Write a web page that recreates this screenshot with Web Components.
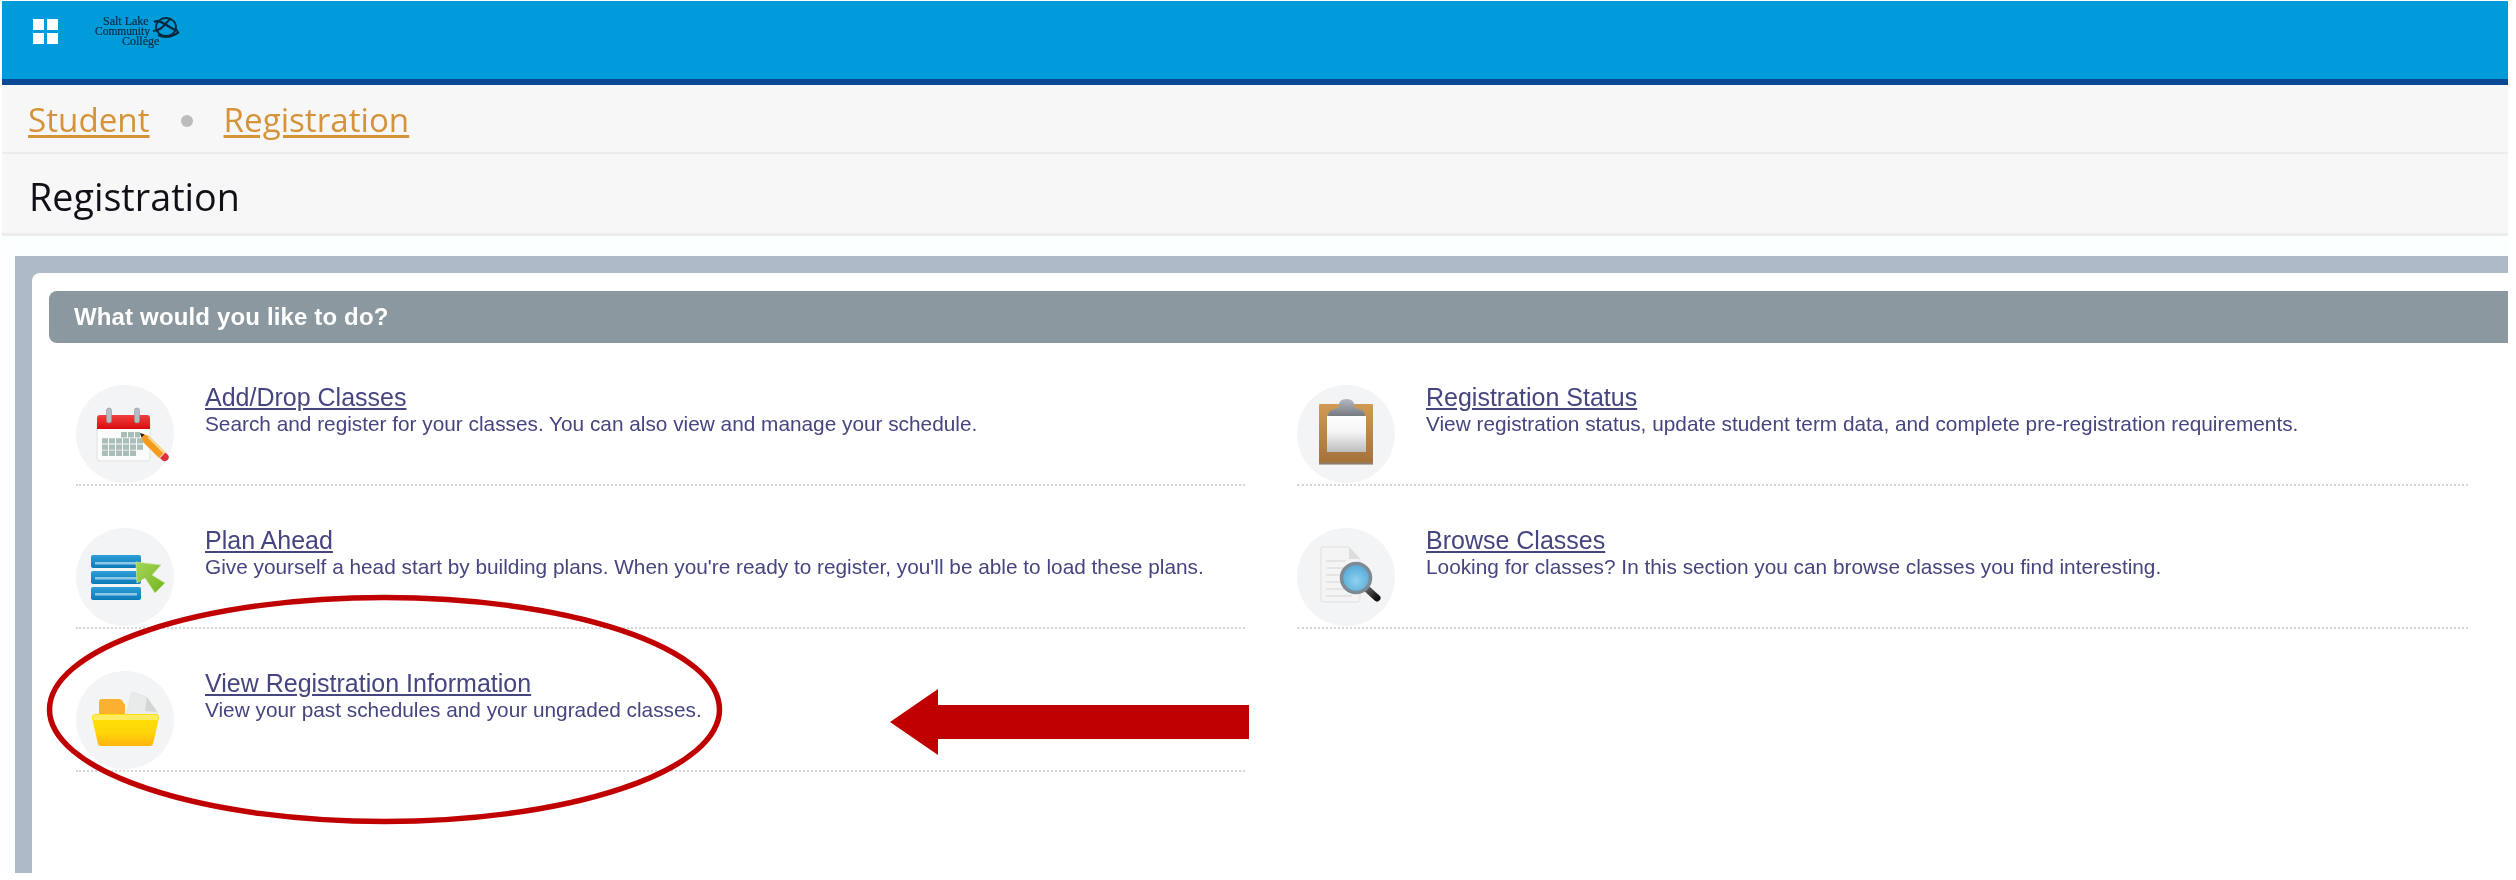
<!DOCTYPE html>
<html lang="en">
<head>
<meta charset="utf-8">
<title>Registration</title>
<style>
html,body{margin:0;padding:0;background:#fff}
body{position:relative;width:2516px;height:880px;overflow:hidden}
</style>
</head>
<body>
<reg-page>
  <reg-topbar slot="top"></reg-topbar>
  <reg-crumbs slot="top"></reg-crumbs>
  <reg-title slot="top">Registration</reg-title>
  <reg-panel heading="What would you like to do?">
    <reg-task icon="calendar" name="Add/Drop Classes">Search and register for your classes. You can also view and manage your schedule.</reg-task>
    <reg-task icon="clipboard" name="Registration Status">View registration status, update student term data, and complete pre-registration requirements.</reg-task>
    <reg-task icon="plan" name="Plan Ahead">Give yourself a head start by building plans. When you're ready to register, you'll be able to load these plans.</reg-task>
    <reg-task icon="browse" name="Browse Classes">Looking for classes? In this section you can browse classes you find interesting.</reg-task>
    <reg-task icon="folder" name="View Registration Information">View your past schedules and your ungraded classes.</reg-task>
  </reg-panel>
</reg-page>
<reg-callout></reg-callout>
<script>
const ICONS = {
calendar:`<defs><linearGradient id="r" x1="0" y1="0" x2="0" y2="1"><stop offset="0" stop-color="#f0403f"/><stop offset="1" stop-color="#d90c10"/></linearGradient></defs>
<rect x="21" y="36" width="53" height="40" rx="3" fill="#fbfbfb" stroke="#dfe2e3"/>
<path d="M21 44V33a3 3 0 0 1 3-3h47a3 3 0 0 1 3 3v11z" fill="url(#r)"/>
<rect x="30.500" y="23" width="5" height="15" rx="2.500" fill="#b5bcc4" stroke="#8b95a0" stroke-width=".6"/>
<rect x="58.500" y="23" width="5" height="15" rx="2.500" fill="#b5bcc4" stroke="#8b95a0" stroke-width=".6"/>
<g fill="#a9bdb9"><path d="M45 47h6v5.400h-6zM52 47h6v5.400h-6zM59 47h5v5.400h-5z"/>
<path d="M26 53.200h6v5.400h-6zM33 53.200h6v5.400h-6zM40 53.200h6v5.400h-6zM47 53.200h6v5.400h-6zM54 53.200h6v5.400h-6zM61 53.200h6v5.400h-6z"/>
<path d="M26 59.400h6v5.400h-6zM33 59.400h6v5.400h-6zM40 59.400h6v5.400h-6zM47 59.400h6v5.400h-6zM54 59.400h6v5.400h-6zM61 59.400h6v5.400h-6z"/>
<path d="M26 65.600h6v5.400h-6zM33 65.600h6v5.400h-6zM40 65.600h6v5.400h-6zM47 65.600h6v5.400h-6zM54 65.600h6v5.400h-6z"/></g>
<path d="M64 48l9 3 16 16-6 6-16-16z" fill="#f59a1f"/>
<path d="M73 51l16 16-1.500 1.500-16-16z" fill="#fcd98a"/>
<path d="M64 48l4.500 1.500-3 3z" fill="#222"/>
<path d="M84 73l5.500-5.500 2 2a3.800 3.800 0 0 1-5.500 5.500z" fill="#e2303a"/>`,
plan:`<defs><linearGradient id="b" x1="0" y1="0" x2="0" y2="1"><stop offset="0" stop-color="#2e9fd6"/><stop offset="1" stop-color="#0d7ab8"/></linearGradient><linearGradient id="g" x1="0" y1="0" x2="1" y2="1"><stop offset="0" stop-color="#a4d65a"/><stop offset="1" stop-color="#74b41f"/></linearGradient></defs>
<g fill="url(#b)"><rect x="15" y="27" width="50" height="13" rx="2"/><rect x="15" y="43" width="50" height="13" rx="2"/><rect x="15" y="59" width="50" height="13" rx="2"/></g>
<g fill="#8fc8e6"><rect x="19" y="34" width="42" height="2.500"/><rect x="19" y="49" width="42" height="2.500"/><rect x="19" y="65" width="42" height="2.500"/></g>
<path d="M60 34l25 3-9 10 13 8-10 10-10-15-8 5z" fill="url(#g)" stroke="#c7e49a" stroke-width=".8"/>`,
folder:`<defs><linearGradient id="y" x1="0" y1="0" x2="0" y2="1"><stop offset="0" stop-color="#ffe100"/><stop offset=".55" stop-color="#ffd60a"/><stop offset="1" stop-color="#ffb50d"/></linearGradient></defs>
<path d="M23 31q0-3 3-3h17q3 0 4 3l2 3v12H23z" fill="#fbb12f"/>
<path d="M50 44l6-23 14 5 11 14 1 6H50z" fill="#e9eaea" stroke="#dcdddd" stroke-width=".6"/>
<path d="M71 26l-2 14 12 1z" fill="#d3d5d5"/>
<path d="M16 47q0-4 4-4h59q4 0 4 4l-6 26q-.5 2-3 2H25q-2.500 0-3-2z" fill="url(#y)"/>
<path d="M17 47q0-3 3-3h59q3 0 3 3l-.5 2H17.500z" fill="#ffec63"/>`,
clipboard:`<defs><linearGradient id="w" x1="0" y1="0" x2="0" y2="1"><stop offset="0" stop-color="#fff"/><stop offset=".45" stop-color="#f4f4f4"/><stop offset="1" stop-color="#bdbdbd"/></linearGradient><linearGradient id="m" x1="0" y1="0" x2="0" y2="1"><stop offset="0" stop-color="#b4b9be"/><stop offset="1" stop-color="#767b82"/></linearGradient><linearGradient id="c" x1="0" y1="0" x2="0" y2="1"><stop offset="0" stop-color="#d09a55"/><stop offset="1" stop-color="#a4713a"/></linearGradient></defs>
<rect x="22" y="19" width="54" height="60" rx="1" fill="url(#c)"/>
<rect x="22" y="77" width="54" height="3" fill="#8d8278" opacity=".6"/>
<rect x="30" y="31" width="39" height="36" fill="url(#w)"/>
<path d="M31 31q0-6 7-7l4-2q-1-8 7.500-8t7.500 8l4 2q7 1 7 7z" fill="url(#m)"/>`,
browse:`<defs><radialGradient id="l" cx=".5" cy=".6" r=".6"><stop offset="0" stop-color="#8fd0f0"/><stop offset="1" stop-color="#4ea6d4"/></radialGradient><linearGradient id="h" x1="0" y1="0" x2="1" y2="1"><stop offset="0" stop-color="#666"/><stop offset="1" stop-color="#111"/></linearGradient></defs>
<path d="M24 21q0-2 2-2h26l11 12v41q0 2-2 2H26q-2 0-2-2z" fill="#f4f4f4" stroke="#dedfe0"/>
<path d="M52 19v12h11z" fill="#dcdddd"/>
<g stroke="#dfdfdf" stroke-width="1.600"><path d="M29 33h20M29 40h24M29 47h22M29 54h20M29 61h24M29 68h26"/></g>
<path d="M69 60l11 10" stroke="url(#h)" stroke-width="7" stroke-linecap="round"/>
<circle cx="59" cy="50" r="14.500" fill="url(#l)" stroke="#7f8b94" stroke-width="3.500"/>`
};

function comp(tag, html){
  customElements.define(tag, class extends HTMLElement{
    connectedCallback(){
      if(this.shadowRoot) return;
      this.attachShadow({mode:'open'}).innerHTML = typeof html==='function'?html(this):html;
    }
  });
}

comp('reg-page',`<style>
:host{display:block;box-sizing:border-box;width:2506px;margin:1px 8px 0 2px;background:#fbffff}
</style><slot name="top"></slot><slot></slot>`);

comp('reg-topbar',`<style>
:host{display:flex;box-sizing:border-box;height:84px;background:#009cd9;border-bottom:6px solid #0b4a92;padding:18px 0 0 31px;align-items:flex-start;gap:37px}
.grid{display:grid;grid-template-columns:11px 11px;grid-auto-rows:11px;gap:3px;filter:blur(.3px)}
.grid i{background:#fff}
.logo{display:flex;filter:blur(.4px);color:#062c44;font:12px/10px "Liberation Serif",serif;margin:-3px 0 0 0;width:84px;height:33px;-webkit-text-stroke:.2px #062c44}
.t{display:flex;flex-direction:column;width:57px}
.t span{white-space:nowrap}
.a{margin-left:8px}.b{font-size:11.500px}.c{margin-left:27px}
svg{flex:none}
</style>
<div class="grid"><i></i><i></i><i></i><i></i></div>
<div class="logo"><div class="t"><span class="a">Salt Lake</span><span class="b">Community</span><span class="c">College</span></div>
<svg width="28" height="24" viewBox="0 0 28 24" fill="none" stroke="#06283c"><ellipse cx="14" cy="11" rx="10" ry="9" stroke-width="1.800"/><path d="M2 6c6-4 14 6 24 9M1 15c8 0 12-7 17-12M6 19c6 3 14 2 21-3" stroke-width="2.200"/></svg></div>`);

comp('reg-crumbs',`<style>
:host{display:flex;box-sizing:border-box;height:69px;background:#f7f7f7;border-bottom:2px solid #ececec;padding:1px 0 0 26px;align-items:center;font:33.2px "Open Sans",sans-serif}
a{color:#d5933a;text-decoration:underline;text-underline-offset:3px;filter:blur(.3px)}
i{width:12px;height:12px;border-radius:50%;background:#bcbcbc;margin:4px 31px 0 31px}
</style><a href="#">Student</a><i></i><a href="#">Registration</a>`);

comp('reg-title',`<style>
:host{display:flex;box-sizing:border-box;height:82px;background:#f7f7f7;border-bottom:3px solid #ececec;padding:5px 0 0 27px;align-items:center;font:37.7px "Open Sans",sans-serif;color:#101018}
span{filter:blur(.3px)}
</style><span><slot></slot></span>`);

comp('reg-panel',h=>`<style>
:host{display:block;box-sizing:border-box;height:617px;margin:20px 0 0 13px;background:#adbbc9;padding:17px 0 0 17px}
.in{box-sizing:border-box;height:100%;background:#fff;border-radius:8px 0 0 0;padding:18px 0 0 17px}
.bar{box-sizing:border-box;height:52px;background:#8c98a0;border-radius:8px 0 0 8px;display:flex;align-items:center;padding-left:25px;font:bold 24px "Liberation Sans",sans-serif;color:#fff;letter-spacing:.15px}
.bar span{filter:blur(.3px)}
.grid{display:grid;grid-template-columns:1169px 1171px;column-gap:52px;margin:0 0 0 27px}
</style><div class="in"><div class="bar"><span>${h.getAttribute('heading')}</span></div><div class="grid"><slot></slot></div></div>`);

comp('reg-task',h=>`<style>
:host{display:grid;grid-template-columns:98px 1fr;column-gap:31px;box-sizing:border-box;height:143px;padding-top:42px;border-bottom:2px dotted #d6d6d6;font-family:"Liberation Sans",sans-serif;color:#45457f}
a{display:block;color:#45457f;font-size:25px;line-height:28px;text-decoration:underline;text-underline-offset:2px}
p{margin:1px 0 0;font-size:20.8px;line-height:24px;white-space:nowrap}
.tx{margin-top:-2px;filter:blur(.3px)}
</style><reg-icon name="${h.getAttribute('icon')}"></reg-icon><div class="tx"><a href="#">${h.getAttribute('name')}</a><p><slot></slot></p></div>`);

comp('reg-icon',h=>`<style>
:host{display:block;width:98px;height:98px;border-radius:50%;background:#f2f4f6}
svg{display:block;filter:blur(.45px)}
</style><svg width="98" height="98" viewBox="0 0 98 98">${ICONS[h.getAttribute('name')]}</svg>`);

comp('reg-callout',`<style>
:host{position:absolute;inset:0;display:block;pointer-events:none}
svg{position:absolute;left:0;top:0}
</style><svg width="2516" height="880" viewBox="0 0 2516 880">
<ellipse cx="384.500" cy="709.500" rx="335" ry="112" fill="none" stroke="#c00000" stroke-width="5.500"/>
<path d="M890 722l48-33v16h311v34H938v16z" fill="#c00000"/>
</svg>`);
</script>
</body>
</html>
